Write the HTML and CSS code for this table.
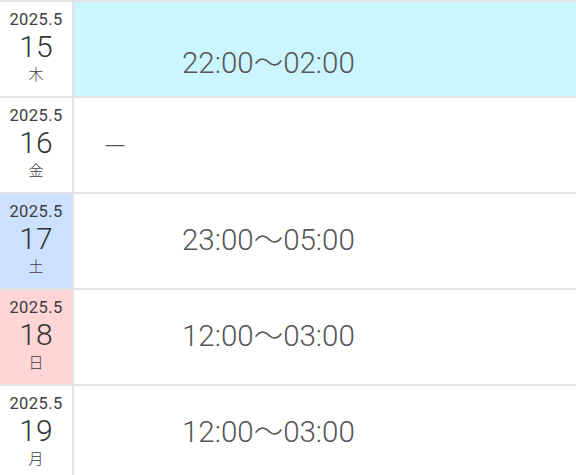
FILE: index.html
```html
<!DOCTYPE html>
<html lang="ja">
<head>
<meta charset="utf-8">
<link rel="stylesheet" href="styles.css">
</head>
<body>
<div class="schedule">
  <div class="row">
    <div class="date"><span class="ym">2025.5</span><span class="day">15</span><span class="wd">木</span></div>
    <div class="time today first"><span>22:00〜02:00</span></div>
  </div>
  <div class="row">
    <div class="date"><span class="ym">2025.5</span><span class="day">16</span><span class="wd">金</span></div>
    <div class="time off"><span>ー</span></div>
  </div>
  <div class="row">
    <div class="date sat"><span class="ym">2025.5</span><span class="day">17</span><span class="wd">土</span></div>
    <div class="time"><span>23:00〜05:00</span></div>
  </div>
  <div class="row">
    <div class="date sun"><span class="ym">2025.5</span><span class="day">18</span><span class="wd">日</span></div>
    <div class="time"><span>12:00〜03:00</span></div>
  </div>
  <div class="row">
    <div class="date"><span class="ym">2025.5</span><span class="day">19</span><span class="wd">月</span></div>
    <div class="time"><span>12:00〜03:00</span></div>
  </div>
</div>
</body>
</html>
```
FILE: styles.css
```css
html, body {
  margin: 0;
  padding: 0;
  background: #fff;
}
body {
  font-family: Roboto, "Noto Sans CJK JP", sans-serif;
  color: #444;
  overflow: hidden;
}
.schedule {
  border-top: 2px solid #e2e2e2;
}
.row {
  display: grid;
  grid-template-columns: 74px 1fr;
  height: 96px;
  border-bottom: 2px solid #e2e2e2;
  box-sizing: border-box;
}
.date {
  border-right: 2px solid #e2e2e2;
  display: flex;
  flex-direction: column;
  align-items: center;
  padding-top: 7px;
  box-sizing: border-box;
  background: #fff;
}
.date.sat { background: #cce0ff; }
.date.sun { background: #ffd5d5; }
.ym {
  font-size: 16.5px;
  line-height: 22px;
  font-weight: 400;
  letter-spacing: 0.4px;
  color: #3d3d3d;
}
.day {
  font-size: 30px;
  line-height: 32px;
  font-weight: 300;
  color: #333;
}
.wd {
  font-size: 15px;
  line-height: 22px;
  font-weight: 300;
  font-family: "Noto Sans CJK JP", sans-serif;
  color: #3d3d3d;
}
.time {
  display: flex;
  align-items: center;
  padding-left: 108px;
  font-size: 29.5px;
  font-weight: 300;
  color: #555;
  padding-bottom: 8px;
  box-sizing: border-box;
}
.time.first {
  padding-top: 30px;
}
.time.today { background: #ccf6ff; }
.time.off { padding-left: 29px; padding-bottom: 2px; }
.time.off span { font-family: "Noto Sans CJK JP", sans-serif; font-size: 24px; }
```
